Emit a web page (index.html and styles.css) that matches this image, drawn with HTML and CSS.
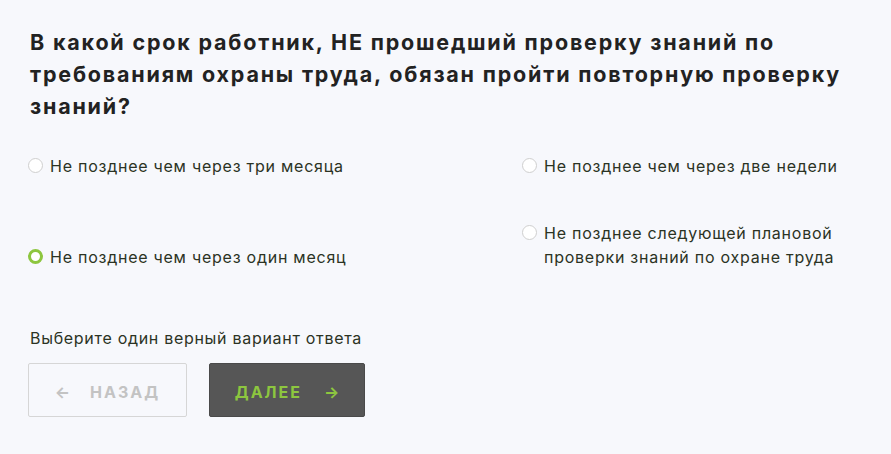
FILE: index.html
```html
<!DOCTYPE html>
<html lang="ru">
<head>
<meta charset="utf-8">
<link rel="stylesheet" href="styles.css">
</head>
<body>
<div class="quiz">
  <h1 class="question">В какой срок работник, НЕ прошедший проверку знаний по требованиям охраны труда, обязан пройти повторную проверку знаний?</h1>
  <div class="options">
    <label class="option"><span class="radio"></span><span class="text">Не позднее чем через три месяца</span></label>
    <label class="option"><span class="radio"></span><span class="text">Не позднее чем через две недели</span></label>
    <label class="option"><span class="radio checked"></span><span class="text">Не позднее чем через один месяц</span></label>
    <label class="option"><span class="radio"></span><span class="text">Не позднее следующей плановой проверки знаний по охране труда</span></label>
  </div>
  <p class="hint">Выберите один верный вариант ответа</p>
  <div class="actions">
    <button class="btn btn-back"><span class="arrow">&larr;</span>НАЗАД</button>
    <button class="btn btn-next">ДАЛЕЕ<span class="arrow">&rarr;</span></button>
  </div>
</div>
</body>
</html>
```

FILE: styles.css
```css
html, body {
  margin: 0;
  padding: 0;
  background: #f7f8fc;
}
body {
  font-family: Inter, "Noto Sans", sans-serif;
  color: #2b3324;
}
.quiz {
  padding: 26px 10px 0 28px;
}
.question {
  margin: 0 0 0 2px;
  font-size: 21.5px;
  line-height: 32px;
  font-weight: 700;
  letter-spacing: 1.8px;
  color: #222222;
  max-width: 850px;
}
.options {
  margin-top: 32px;
  display: grid;
  grid-template-columns: 494px 1fr;
  row-gap: 43px;
  align-items: end;
}
.option {
  display: flex;
  align-items: flex-start;
  gap: 7px;
  font-size: 16px;
  letter-spacing: 0.75px;
  line-height: 24px;
  cursor: pointer;
}
.option .text {
  max-width: 310px;
}
.radio {
  flex: none;
  width: 15px;
  height: 15px;
  box-sizing: border-box;
  border: 1px solid #cfcfcf;
  border-radius: 50%;
  background: #ffffff;
  margin-top: 4px;
}
.radio.checked {
  border: 3.5px solid #8dc63f;
}
.hint {
  margin: 59px 0 0 2px;
  font-size: 16px;
  letter-spacing: 0.7px;
  line-height: 20px;
}
.actions {
  display: flex;
  gap: 22px;
  margin-top: 15px;
}
.btn {
  width: 159px;
  height: 54px;
  box-sizing: border-box;
  padding-top: 4px;
  font-family: Inter, "Noto Sans", sans-serif;
  font-size: 16px;
  font-weight: 700;
  letter-spacing: 2px;
  border-radius: 2px;
  display: flex;
  align-items: center;
  justify-content: center;
  cursor: pointer;
}
.btn .arrow {
  letter-spacing: 0;
  font-weight: 700;
}
.btn-back {
  background: transparent;
  border: 1px solid #d6d6d6;
  color: #c3c3c3;
}
.btn-back .arrow {
  margin-right: 20px;
}
.btn-next {
  width: 156px;
  background: #565656;
  border: 1px solid #4a4a4a;
  color: #8dc63f;
}
.btn-next .arrow {
  margin-left: 22px;
}
```
